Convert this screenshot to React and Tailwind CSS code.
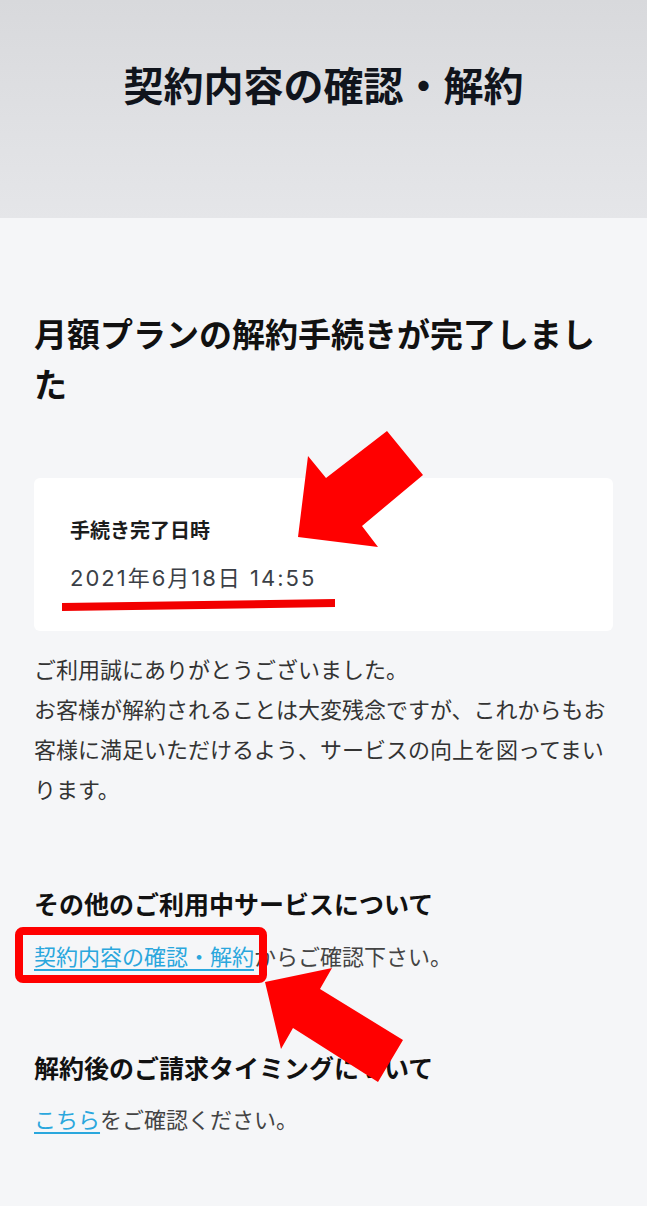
import React from 'react';

const font = { fontFamily: '"Noto Sans CJK JP", "Noto Sans", sans-serif' };
const dateFont = { fontFamily: 'Inter, "Noto Sans CJK JP", sans-serif' };

const Annotations = () => (
  <svg className="pointer-events-none absolute left-0 top-0" width="647" height="1206" viewBox="0 0 647 1206">
    {/* arrow to date */}
    <polygon points="298,537 308,456 326,478 387,431 423,475 362,526 378,547" fill="#ff0000" />
    {/* underline */}
    <polygon points="62,603 335,599 335,607 62,611" fill="#f20000" />
    {/* box round link */}
    <rect x="19" y="931" width="244" height="48" rx="4" fill="none" stroke="#ff0000" strokeWidth="8" />
    {/* arrow to link */}
    <polygon points="265,982 332,968 320,989 403,1040 378,1082 293,1028 281,1049" fill="#ff0000" />
  </svg>
);

const App = () => {
  return (
    <div className="relative min-h-[1206px] w-[647px] bg-[#f5f6f8]" style={font}>
      <header className="flex h-[218px] justify-center bg-gradient-to-b from-[#d8d9dc] to-[#e5e6e9] pt-[58px]">
        <h1 className="text-[40px] font-bold leading-[52px] text-[#10141c]">契約内容の確認・解約</h1>
      </header>

      <main className="px-[34px] pb-10">
        <h2 className="mt-[90px] text-[33px] font-bold leading-[50px] text-[#111]">月額プランの解約手続きが完了しました</h2>

        <div className="mt-[70px] rounded-md bg-white px-[36px] pb-[38px] pt-[38px]">
          <p className="text-[20px] font-bold leading-[28px] text-[#1c1c1c]">手続き完了日時</p>
          <p className="mt-[19px] text-[22px] leading-[30px] tracking-[2px] text-[#3b3f46]" style={dateFont}>2021年6月18日 14:55</p>
        </div>

        <div className="mt-[17px] text-[22px] leading-[40px] text-[#333]">
          <p>ご利用誠にありがとうございました。</p>
          <p>
            お客様が解約されることは大変残念ですが、これからもお
            <br />
            客様に満足いただけるよう、サービスの向上を図ってまい
            <br />
            ります。
          </p>
        </div>

        <section className="mt-[77px]">
          <h3 className="text-[25px] font-bold leading-[36px] text-[#111]">その他のご利用中サービスについて</h3>
          <p className="mt-[14px] text-[22px] leading-[40px] text-[#444]">
            <a className="text-[#2aa7dd] underline underline-offset-4">契約内容の確認・解約</a>からご確認下さい。
          </p>
        </section>

        <section className="mt-[74px]">
          <h3 className="text-[25px] font-bold leading-[36px] text-[#111]">解約後のご請求タイミングについて</h3>
          <p className="mt-[13px] text-[22px] leading-[40px] text-[#444]">
            <a className="text-[#2aa7dd] underline underline-offset-4">こちら</a>をご確認ください。
          </p>
        </section>
      </main>

      <Annotations />
    </div>
  );
};

export default App;
